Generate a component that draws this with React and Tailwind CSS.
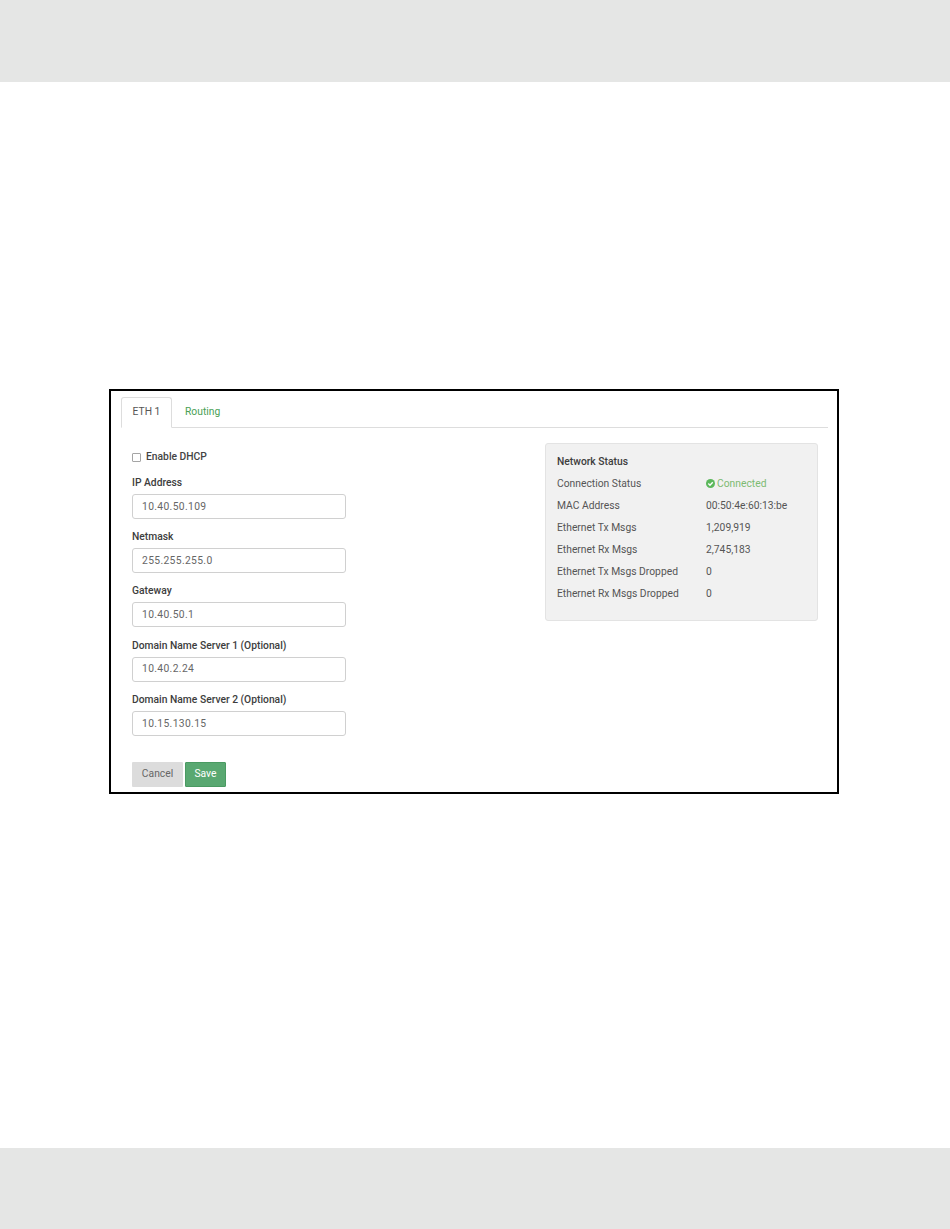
import React from "react";

const fields = [
  ["IP Address", "10.40.50.109"],
  ["Netmask", "255.255.255.0"],
  ["Gateway", "10.40.50.1"],
  ["Domain Name Server 1 (Optional)", "10.40.2.24"],
  ["Domain Name Server 2 (Optional)", "10.15.130.15"],
];

const rows = [
  ["MAC Address", "00:50:4e:60:13:be"],
  ["Ethernet Tx Msgs", "1,209,919"],
  ["Ethernet Rx Msgs", "2,745,183"],
  ["Ethernet Tx Msgs Dropped", "0"],
  ["Ethernet Rx Msgs Dropped", "0"],
];

function Check() {
  return (
    <svg width="9" height="9" viewBox="0 0 10 10" className="mr-[2px] shrink-0">
      <circle cx="5" cy="5" r="5" fill="#5cb85c" />
      <path d="M2.6 5.1 L4.4 6.9 L7.5 3.6" fill="none" stroke="#fff" strokeWidth="1.5" />
    </svg>
  );
}

export default function App() {
  return (
    <div className="flex flex-col h-[1229px] bg-white text-[10.3px] text-[#444] font-['Roboto',sans-serif]">
      <div className="h-[82px] bg-[#e5e6e5]" />
      <main className="flex-1 pt-[307px] pl-[109px]">
        <div className="w-[730px] h-[405px] border-2 border-black pt-[6px] pl-[10px] pr-[7px]">
          <div className="flex h-[31px] mr-[2px] border-b border-[#dddddd] text-[10.3px]">
            <div className="w-[51px] h-[31px] pb-[1px] flex items-center justify-center bg-white border border-[#dddddd] border-b-white rounded-t-[3px] text-[#555]">
              ETH 1
            </div>
            <div className="ml-[13px] pb-[1px] flex items-center text-[#4a9f55]">Routing</div>
          </div>
          <div className="flex pl-[11px]">
            <div className="w-[214px]">
              <label className="flex items-center h-[12px] mt-[23px] font-medium text-[#444]">
                <span className="w-[9px] h-[9px] border border-[#a5a5a5] bg-white rounded-[1px] mr-[5px]" />
                Enable DHCP
              </label>
              <div className="mt-[14px] flex flex-col gap-[5px]">
                {fields.map(([l, v]) => (
                  <div key={l} className="h-[49.2px]">
                    <div className="h-[12px] leading-[12px] font-medium text-[#3d3d3d]">{l}</div>
                    <div className="mt-[5px] h-[25px] flex items-center pl-[9px] bg-white border border-[#d0d0d0] rounded-[3px] text-[#666] tracking-[0.35px]">
                      {v}
                    </div>
                  </div>
                ))}
              </div>
              <div className="flex gap-[2px] mt-[19px] text-[10.3px]">
                <div className="w-[51px] h-[25px] pb-[1px] flex items-center justify-center bg-[#dcdcdc] text-[#666] rounded-[1px]">
                  Cancel
                </div>
                <div className="w-[41px] h-[25px] pb-[1px] flex items-center justify-center bg-[#59a871] border border-[#4a9a62] text-white rounded-[1px]">
                  Save
                </div>
              </div>
            </div>
            <div className="ml-[199px] mt-[15px] w-[273px] h-[178px] bg-[#f1f1f1] border border-[#e3e3e3] rounded-[3px] pl-[11px] pt-[11px] text-[#555]">
              <div className="h-[13px] leading-[13px] font-medium text-[#3d3d3d]">Network Status</div>
              <div className="mt-[9px] flex h-[13px] leading-[13px] items-center">
                <div className="w-[149px]">Connection Status</div>
                <div className="flex items-center text-[#7dbb72]">
                  <Check />
                  Connected
                </div>
              </div>
              {rows.map(([l, v]) => (
                <div key={l} className="mt-[9px] flex h-[13px] leading-[13px]">
                  <div className="w-[149px]">{l}</div>
                  <div>{v}</div>
                </div>
              ))}
            </div>
          </div>
        </div>
      </main>
      <div className="h-[81px] bg-[#e5e6e5]" />
    </div>
  );
}
